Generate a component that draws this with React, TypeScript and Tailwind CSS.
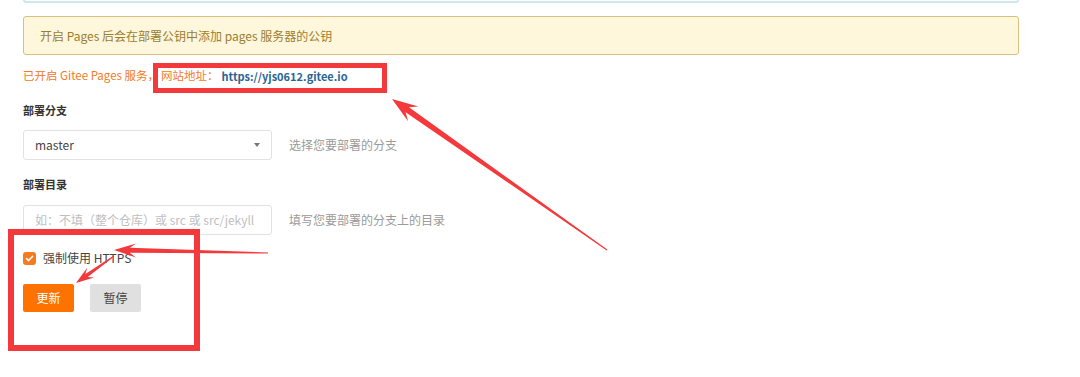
import React from 'react';

type Pt = [number, number];

// tapered annotation arrow, like the ones a screenshot tool draws
const arrowPoints = (tail: Pt, tip: Pt, head = 24, spread = 9, neck = 3): string => {
  const [tx, ty] = tail;
  const [px, py] = tip;
  const len = Math.hypot(px - tx, py - ty);
  const ux = (px - tx) / len;
  const uy = (py - ty) / len;
  const nx = -uy;
  const ny = ux;
  const at = (d: number, w: number): Pt => [px - ux * d + nx * w, py - uy * d + ny * w];
  const pts: Pt[] = [
    [px, py],
    at(head, spread),
    at(head * 0.72, neck),
    [tx + nx * 0.5, ty + ny * 0.5],
    [tx - nx * 0.5, ty - ny * 0.5],
    at(head * 0.72, -neck),
    at(head, -spread),
  ];
  return pts.map(([x, y]) => `${x.toFixed(1)},${y.toFixed(1)}`).join(' ');
};

const Annotations: React.FC = () => (
  <div className="pointer-events-none absolute inset-0">
    <div className="absolute left-[153px] top-[63px] h-[30px] w-[234px] border-[5px] border-[#f4393c]" />
    <div className="absolute left-[8px] top-[229px] h-[122px] w-[192px] border-[6px] border-[#f4393c]" />
    <svg className="absolute left-0 top-0" width="1080" height="377" viewBox="0 0 1080 377">
      <polygon points={arrowPoints([607, 250], [392, 99], 26, 9, 3)} fill="#f4393c" />
      <polygon points={arrowPoints([268, 253], [114, 250], 22, 7, 2.5)} fill="#f4393c" />
      <polygon points={arrowPoints([114, 256], [76, 283], 18, 6, 2)} fill="#f4393c" />
    </svg>
  </div>
);

export default function App() {
  return (
    <div
      className="relative h-[377px] w-[1080px] overflow-hidden bg-white text-[12px] text-[#333]"
      style={{ fontFamily: '"Noto Sans CJK SC", "Noto Sans", sans-serif' }}
    >
      <div className="ml-[23px] w-[996px]">
        <div className="-mt-[27px] h-[30px] rounded-[3px] border-2 border-[#cfe8ee] bg-[#fbfdfe]" />

        <div className="mt-[13px] flex h-[39px] items-center rounded-[3px] border border-[#d9c07e] bg-[#fef7db] px-[16px] text-[#9c7d30]">
          开启 Pages 后会在部署公钥中添加 pages 服务器的公钥
        </div>

        <div className="mt-[11px] flex h-[20px] items-center text-[11.5px] text-[#f37a25]">
          <span>已开启 Gitee Pages 服务，</span>
          <span className="ml-[2px]">网站地址：</span>
          <span className="ml-[3px] text-[11px] font-semibold text-[#2b6592]">https://yjs0612.gitee.io</span>
        </div>

        <div className="mt-[14px] flex h-[20px] items-center text-[11px] font-bold text-[#333]">部署分支</div>
        <div className="mt-[10px] flex items-center">
          <div className="flex h-[30px] w-[249px] items-center justify-between rounded-[3px] border border-[#e2e2e2] bg-white pl-[11px] pr-[11px] text-[#444]">
            <span>master</span>
            <span className="h-0 w-0 border-x-[3.5px] border-t-[4px] border-x-transparent border-t-[#777]" />
          </div>
          <span className="ml-[17px] text-[#9a9a9a]">选择您要部署的分支</span>
        </div>

        <div className="mt-[14px] flex h-[20px] items-center text-[11px] font-bold text-[#333]">部署目录</div>
        <div className="mt-[11px] flex items-center">
          <div className="flex h-[30px] w-[249px] items-center rounded-[3px] border border-[#e2e2e2] bg-white pl-[11px] text-[#c0c0c0]">
            如：不填（整个仓库）或 src 或 src/jekyll
          </div>
          <span className="ml-[17px] text-[#9a9a9a]">填写您要部署的分支上的目录</span>
        </div>

        <div className="mt-[13px] flex h-[20px] items-center">
          <span className="flex h-[13px] w-[13px] items-center justify-center rounded-[3px] bg-[#f57b20]">
            <svg width="9" height="9" viewBox="0 0 10 10" fill="none">
              <path d="M1.8 5.2l2.2 2.1 4.3-4.6" stroke="white" strokeWidth="1.8" strokeLinecap="round" strokeLinejoin="round" />
            </svg>
          </span>
          <span className="ml-[7px] text-[#444]">强制使用 HTTPS</span>
        </div>

        <div className="mt-[16px] flex items-center gap-[16px]">
          <button className="flex h-[28px] w-[51px] items-center justify-center rounded-[2px] bg-[#fe7300] text-white">更新</button>
          <button className="flex h-[28px] w-[51px] items-center justify-center rounded-[2px] bg-[#e0e0e0] text-[#444]">暂停</button>
        </div>
      </div>

      <Annotations />
    </div>
  );
}
